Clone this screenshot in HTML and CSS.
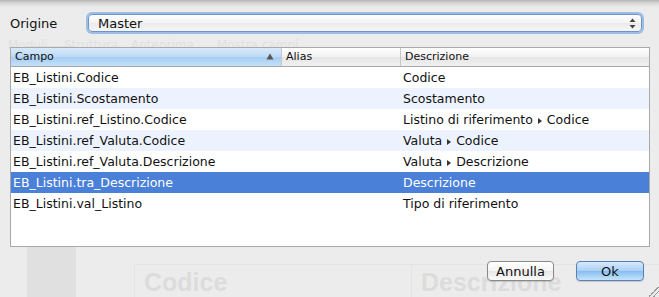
FILE: index.html
```html
<!DOCTYPE html>
<html lang="it">
<head>
    <meta charset="UTF-8">
    <title>Origine</title>
    <link rel="stylesheet" href="styles.css">
</head>
<body>
<div class="sheet">
    <!-- finestra dietro, vista in trasparenza -->
    <div class="ghost">
        <div class="ghost-band"></div>
        <span class="ghost-tool t1">Moduli</span>
        <span class="ghost-tool t2">Struttura</span>
        <span class="ghost-tool t3">Anteprima</span>
        <span class="ghost-tool t4">Mostra campi</span>
        <div class="ghost-box">
            <span class="ghost-cell c1">Codice</span>
            <span class="ghost-cell c2">Descrizione</span>
        </div>
    </div>

    <div class="origin">
        <label class="origin-label">Origine</label>
        <div class="popup">
            <span>Master</span>
            <svg class="popup-arrows" width="7" height="11" viewBox="0 0 7 11">
                <path d="M3.5 0.5 L6.5 4 L0.5 4 Z" fill="#444"/>
                <path d="M3.5 10.5 L6.5 7 L0.5 7 Z" fill="#444"/>
            </svg>
        </div>
    </div>

    <div class="table">
        <div class="head">
            <div class="th th-campo sorted">Campo
                <svg class="sort" width="8" height="7" viewBox="0 0 8 7"><path d="M4 0.5 L7.5 6.5 L0.5 6.5 Z" fill="#555"/></svg>
            </div>
            <div class="th th-alias">Alias</div>
            <div class="th th-desc">Descrizione</div>
        </div>
        <div class="row"><span class="td td-campo">EB_Listini.Codice</span><span class="td td-alias"></span><span class="td td-desc">Codice</span></div>
        <div class="row"><span class="td td-campo">EB_Listini.Scostamento</span><span class="td td-alias"></span><span class="td td-desc">Scostamento</span></div>
        <div class="row"><span class="td td-campo">EB_Listini.ref_Listino.Codice</span><span class="td td-alias"></span><span class="td td-desc">Listino di riferimento <i class="tri"></i> Codice</span></div>
        <div class="row"><span class="td td-campo">EB_Listini.ref_Valuta.Codice</span><span class="td td-alias"></span><span class="td td-desc">Valuta <i class="tri"></i> Codice</span></div>
        <div class="row"><span class="td td-campo">EB_Listini.ref_Valuta.Descrizione</span><span class="td td-alias"></span><span class="td td-desc">Valuta <i class="tri"></i> Descrizione</span></div>
        <div class="row selected"><span class="td td-campo">EB_Listini.tra_Descrizione</span><span class="td td-alias"></span><span class="td td-desc">Descrizione</span></div>
        <div class="row"><span class="td td-campo">EB_Listini.val_Listino</span><span class="td td-alias"></span><span class="td td-desc">Tipo di riferimento</span></div>
    </div>

    <div class="buttons">
        <button class="btn">Annulla</button>
        <button class="btn btn-default">Ok</button>
    </div>
    <div class="grip"></div>
</div>
</body>
</html>
```

FILE: styles.css
```css
html, body {
    margin: 0;
    padding: 0;
}

body {
    width: 659px;
    height: 297px;
    overflow: hidden;
    background: #ececec;
    font-family: "DejaVu Sans", "Liberation Sans", sans-serif;
    color: #111;
}

.sheet {
    position: relative;
    width: 659px;
    height: 297px;
    background: linear-gradient(#b4b4b4 0, #d6d6d6 3px, #ebebeb 7px, #ececec 12px);
}

/* fondo sbiadito */
.ghost {
    position: absolute;
    left: 0;
    top: 0;
    width: 659px;
    height: 297px;
}

.ghost-band {
    position: absolute;
    left: 27px;
    top: 46px;
    width: 49px;
    height: 251px;
    background: #e0e0e0;
}

.ghost-tool {
    position: absolute;
    top: 38px;
    font-size: 12px;
    color: #e0e0e0;
}
.t1 { left: 8px; }
.t2 { left: 64px; }
.t3 { left: 131px; }
.t4 { left: 217px; }

.ghost-box {
    position: absolute;
    left: 134px;
    top: 264px;
    width: 540px;
    height: 40px;
    border: 1px solid #e4e4e4;
    display: flex;
}

.ghost-cell {
    font-family: "Liberation Sans", sans-serif;
    font-weight: bold;
    font-size: 25px;
    color: #dcdcdc;
    padding: 3px 0 0 9px;
}
.c1 {
    width: 267px;
    border-right: 1px solid #e4e4e4;
}

/* riga origine */
.origin {
    position: relative;
    display: flex;
    align-items: center;
    padding: 12px 0 0 10px;
    height: 22px;
}

.origin-label {
    font-size: 13px;
    width: 78px;
}

.popup {
    position: relative;
    width: 543px;
    height: 16px;
    padding: 0 0 0 9px;
    display: flex;
    align-items: center;
    justify-content: space-between;
    font-size: 13px;
    border: 1px solid #6d94c9;
    border-radius: 4px;
    background: linear-gradient(#ffffff, #f3f3f3 50%, #ebebeb 51%, #f6f6f6);
    box-shadow: 0 0 0 2px #9cbde6;
}

.popup-arrows {
    margin-right: 5px;
}

/* tabella */
.table {
    position: relative;
    margin: 13px 0 0 10px;
    width: 638px;
    height: 198px;
    border: 1px solid #a9a9a9;
    background: #fff;
    font-size: 12.5px;
}

.head {
    display: flex;
    height: 18px;
    border-bottom: 1px solid #a8a8a8;
    background: linear-gradient(#ffffff, #f1f1f1 50%, #e6e6e6 51%, #f0f0f0);
}

.th {
    position: relative;
    font-size: 11px;
    line-height: 18px;
    box-sizing: border-box;
    border-right: 1px solid #c8c8c8;
    padding-left: 4px;
}

.sorted {
    background: linear-gradient(#d9eafa, #bcd9f5 50%, #a6cdf2 51%, #c3e0fa);
}

.sort {
    position: absolute;
    right: 7px;
    top: 5px;
}

.th-campo { width: 271px; }
.th-alias { width: 119px; }
.th-desc { flex: 1; border-right: none; }

.row {
    display: flex;
    height: 21px;
    line-height: 21px;
}

.row:nth-child(odd) {
    background: #edf3fe;
}

.row.selected {
    background: #4a80d8;
    color: #fff;
}

.td {
    white-space: nowrap;
    box-sizing: border-box;
}

.td-campo { width: 271px; padding-left: 2px; }
.td-alias { width: 119px; }
.td-desc { flex: 1; padding-left: 2px; }

.tri {
    display: inline-block;
    width: 0;
    height: 0;
    border-top: 3.5px solid transparent;
    border-bottom: 3.5px solid transparent;
    border-left: 4px solid #333;
    vertical-align: 0;
    margin: 0 1px;
}

/* pulsanti */
.buttons {
    position: relative;
    display: flex;
    justify-content: flex-end;
    gap: 22px;
    padding: 14px 15px 0 0;
}

.btn {
    font-family: "DejaVu Sans", sans-serif;
    font-size: 13px;
    height: 20px;
    padding: 0;
    width: 67px;
    color: #111;
    border: 1px solid #8a8a8a;
    border-radius: 4px;
    background: linear-gradient(#ffffff, #f4f4f4 50%, #e8e8e8 51%, #fafafa);
    box-shadow: 0 1px 1px rgba(0, 0, 0, .15);
}

.btn-default {
    width: 68px;
    border-color: #5a7fb8;
    background: linear-gradient(#d7e9fb, #a9d0f5 50%, #86bdf0 51%, #c6e4fc);
}

.grip {
    position: absolute;
    right: 0;
    bottom: 0;
    width: 10px;
    height: 10px;
    background: linear-gradient(135deg, transparent 45%, #999 45%, #999 52%, transparent 52%, transparent 68%, #999 68%, #999 75%, transparent 75%);
}
```
